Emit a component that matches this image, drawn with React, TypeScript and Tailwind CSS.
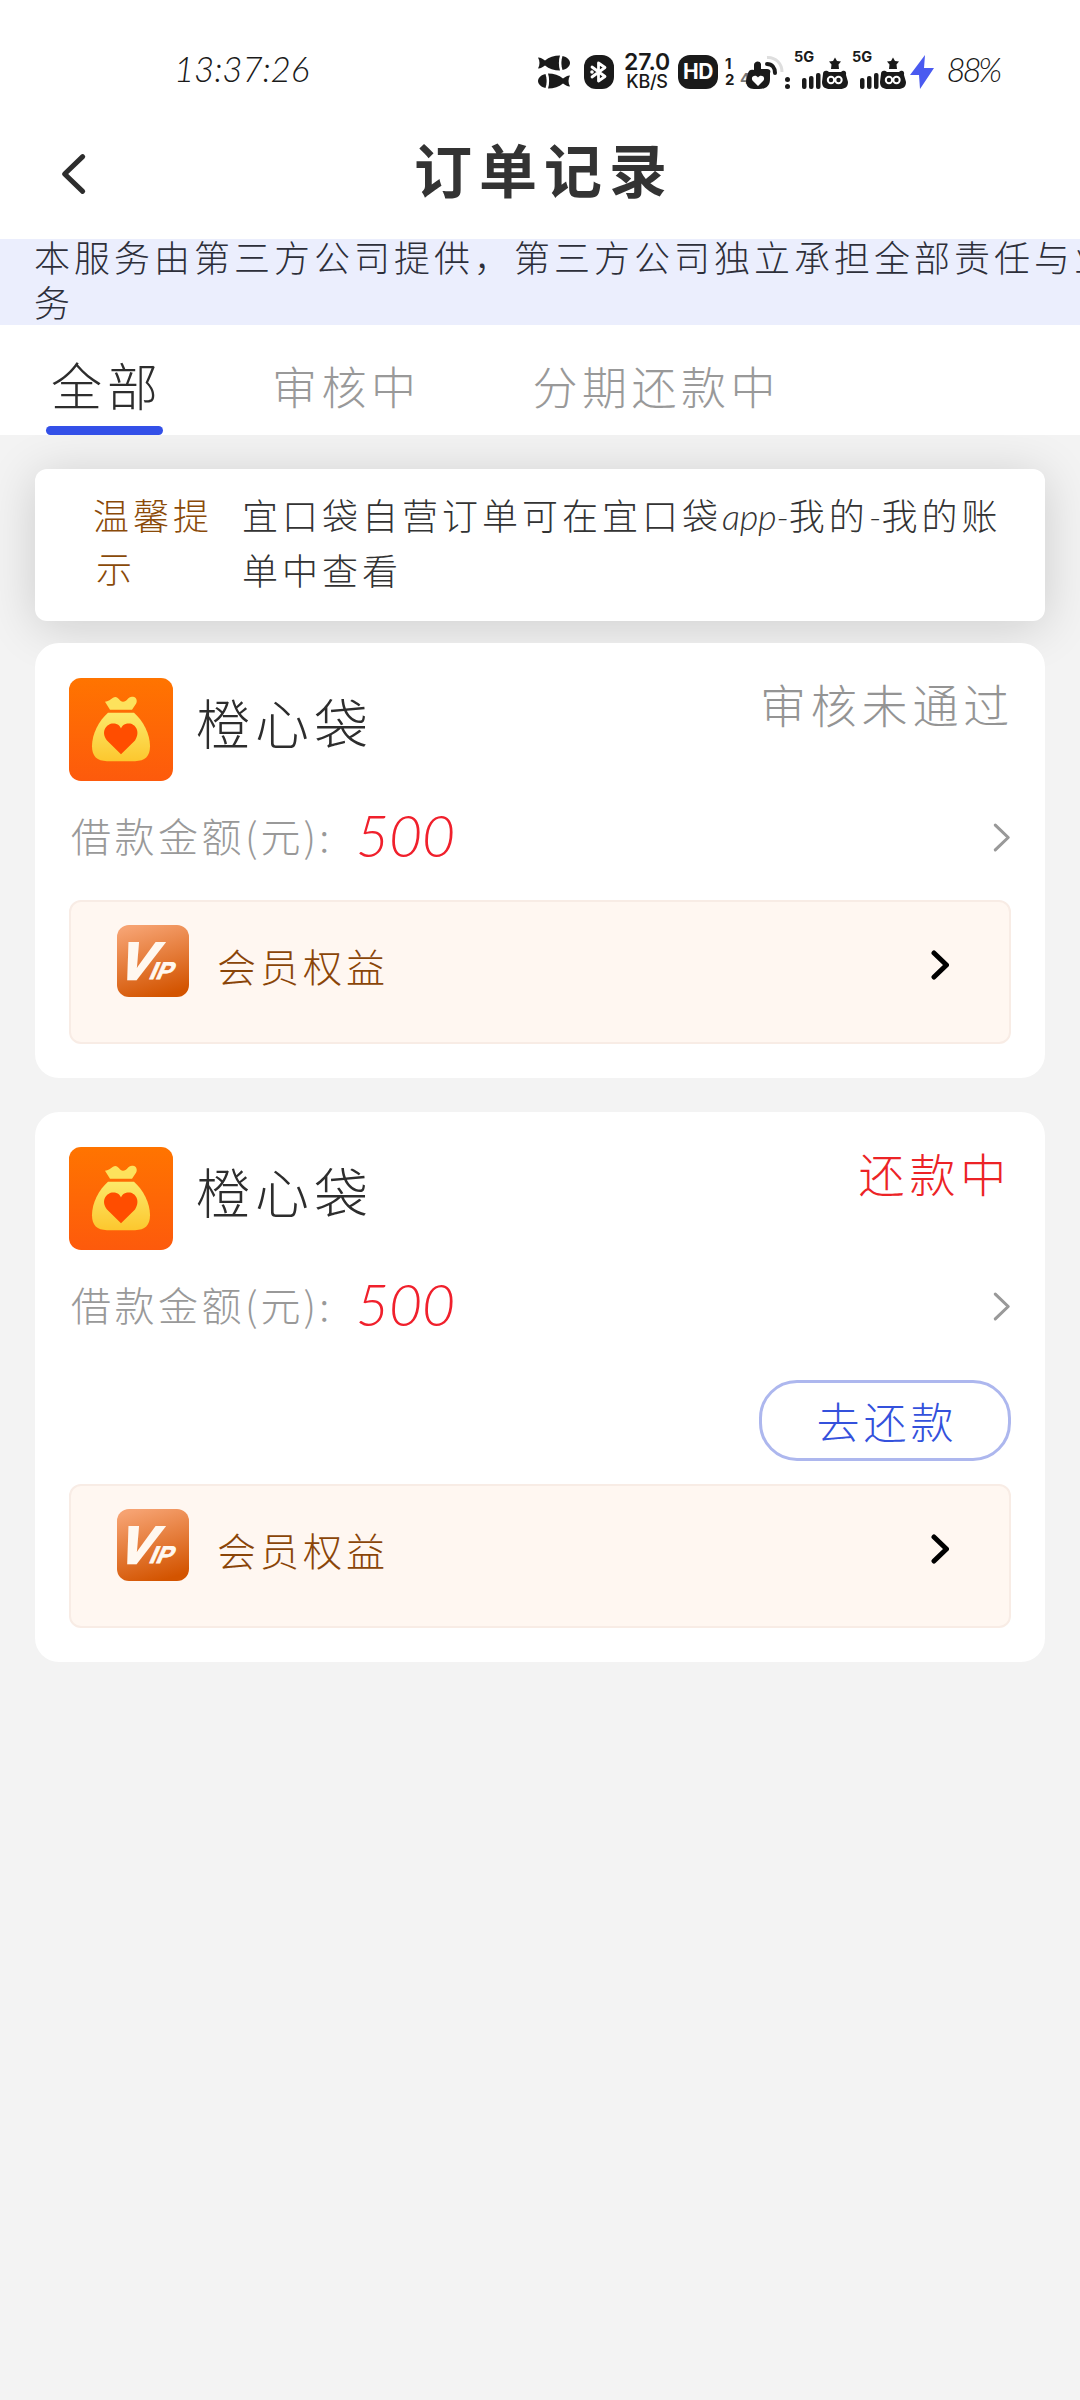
import React from 'react';

interface OrderType {
  id: number;
  name: string;
  amount: number;
  status: string;
  repaying: boolean;
}

const orders: OrderType[] = [
  { id: 1, name: '橙心袋', amount: 500, status: '审核未通过', repaying: false },
  { id: 2, name: '橙心袋', amount: 500, status: '还款中', repaying: true },
];

const tabs = ['全部', '审核中', '分期还款中'];

function Fish({ flip }: { flip?: boolean }) {
  return (
    <svg width="32" height="16" viewBox="0 0 32 16" className={flip ? '-scale-x-100' : ''}>
      <path
        d="M0 2.500C3 2.500 5 4 7 5.500C11 2 16 .5 22 .5C20.500 5 20.500 11 22 15.500C16 15.500 11 14 7 10.500C5 12 3 13.500 0 13.500C2 10 2 6 0 2.500Z"
        fill="#1a1a1a"
      />
      <path d="M24.500 1C29 2 32 5 32 8C32 11 29 14 24.500 15C23 11 23 5 24.500 1Z" fill="#1a1a1a" />
    </svg>
  );
}

function BluetoothBadge() {
  return (
    <svg width="30" height="34" viewBox="0 0 30 34" className="ml-[14px]">
      <rect width="30" height="34" rx="12" fill="#1a1a1a" />
      <path
        d="M8 12L21 21.500L14.500 26V8L21 12.500L8 22"
        fill="none"
        stroke="#fff"
        strokeWidth="2.800"
        strokeLinecap="round"
        strokeLinejoin="round"
      />
      <circle cx="8" cy="17" r="1.800" fill="#fff" />
    </svg>
  );
}

function HandHeart() {
  return (
    <svg width="44" height="34" viewBox="0 0 44 34" className="ml-[6px] overflow-visible">
      <text x="0" y="29" fontFamily="Inter, sans-serif" fontSize="15" fontWeight="700" fill="#777">
        4
      </text>
      <path
        d="M14 15V10C14 6 20 5 21 9V14H27C30 14 31 16 30 18V24C30 31 26 34 19 34H14C9 34 6 31 6 26L8 18C9 15 11 14 14 15Z"
        fill="#1a1a1a"
      />
      <path d="M18 31L12.500 25.500C10 21 16 19 18 22.500C20 19 26 21 23.500 25.500Z" fill="#fff" />
      <path d="M27 9C32 9 35 13 35 18" fill="none" stroke="#1a1a1a" strokeWidth="4" strokeLinecap="round" />
      <path d="M27 2.500C36 2 42 9 42 17" fill="none" stroke="#dedede" strokeWidth="3" />
    </svg>
  );
}

function Signal() {
  return (
    <svg width="54" height="40" viewBox="0 0 54 40" className="mt-[-6px] overflow-visible">
      <text x="0" y="13" fontFamily="Inter, sans-serif" fontSize="14.500" fontWeight="700" fill="#1a1a1a">
        5G
      </text>
      <g fill="#1a1a1a">
        <rect x="8" y="29" width="4.500" height="11" rx="2" />
        <rect x="15" y="27" width="4.500" height="13" rx="2" />
        <rect x="22" y="24" width="4.500" height="16" rx="2" />
        <path d="M29 25C29 21 33 21 35 23H47C49 21 53 21 52 26L54 33C54 38 51 40 46 40H36C31 40 28 38 28 33Z" />
        <path d="M41 8.500L43 12L47 12.500L44.500 15.500L45 20H37L37.500 15.500L35 12.500L39 12Z" />
      </g>
      <g fill="none" stroke="#fff" strokeWidth="2">
        <circle cx="37" cy="31" r="3.200" />
        <circle cx="44.500" cy="31" r="3.200" />
      </g>
    </svg>
  );
}

function StatusBar() {
  return (
    <div className="flex h-[112px] items-center pt-8 pl-[174px] text-[#1a1a1a]">
      <span className="w-[136px] pb-[7px] font-[Lato] text-[35px] leading-none font-light tracking-[-0.2px] whitespace-nowrap italic">
        13:37:26
      </span>
      <div className="ml-[228px] flex flex-col gap-[2px]">
        <Fish />
        <Fish flip />
      </div>
      <BluetoothBadge />
      <div className="ml-[10px] flex w-[46px] flex-col items-center font-[Inter] font-medium">
        <span className="text-[23px] leading-[20px] font-semibold tracking-[-0.2px]">27.0</span>
        <span className="text-[18px] leading-[20px] tracking-[-0.3px]">KB/S</span>
      </div>
      <span className="ml-[8px] flex h-[34px] w-10 items-center justify-center rounded-xl bg-[#1a1a1a] font-[Inter] text-[21px] font-bold tracking-[-0.5px] text-white">
        HD
      </span>
      <div className="ml-[7px] flex flex-col font-[Inter] text-[15px] leading-[16px] font-bold">
        <span>1</span>
        <span>2</span>
      </div>
      <HandHeart />
      <div className="ml-[1px] flex flex-col gap-[2px] self-center pt-[22px]">
        <span className="size-[5px] rounded-full bg-[#1a1a1a]" />
        <span className="size-[5px] rounded-full bg-[#1a1a1a]" />
      </div>
      <div className="ml-[4px] flex gap-1">
        <Signal />
        <Signal />
      </div>
      <svg width="24" height="34" viewBox="0 0 24 34" className="ml-[4px]">
        <path d="M15 0L0 20H9L10 34L24 13H14Z" fill="#4a5af0" />
      </svg>
      <span className="ml-[12px] pb-[6px] font-[Lato] text-[33px] leading-none font-light tracking-[-3.2px] italic">
        88%
      </span>
    </div>
  );
}

function Chevron({ className, strokeWidth }: { className: string; strokeWidth: number }) {
  return (
    <svg viewBox="0 0 18 30" className={className} fill="none" stroke="currentColor">
      <path d="M3 3L15.500 15L3 27" strokeWidth={strokeWidth} strokeLinecap="round" strokeLinejoin="round" />
    </svg>
  );
}

function BagLogo() {
  return (
    <svg width="104" height="103" viewBox="0 0 104 104" preserveAspectRatio="none">
      <defs>
        <linearGradient id="bagBg" x1="0" y1="0" x2="0" y2="1">
          <stop offset="0" stopColor="#ff7400" />
          <stop offset="1" stopColor="#fd5a0c" />
        </linearGradient>
        <linearGradient id="bag" x1="0" y1="0" x2="0" y2="1">
          <stop offset="0" stopColor="#fce96a" />
          <stop offset="1" stopColor="#fcc72e" />
        </linearGradient>
      </defs>
      <rect width="104" height="104" rx="12" fill="url(#bagBg)" />
      <path
        d="M41 32L36 24C39 24 41 22 44 20C49 17 50 24 54 24C58 24 59 19 63 19C67 18 69 23 67 26L63 32Z"
        fill="#fde25c"
      />
      <path
        d="M39 35H65C74 43 81 56 81 69C81 79 76 84 66 84H38C28 84 23 79 23 69C23 56 30 43 39 35Z"
        fill="url(#bag)"
      />
      <path d="M52 77L38 63C31 54 38 46 44 46C48 46 51 48 52 51C53 48 56 46 60 46C66 46 72 54 66 63Z" fill="#ff4d00" />
    </svg>
  );
}

function VipLogo() {
  return (
    <svg width="72" height="72" viewBox="0 0 72 72">
      <defs>
        <linearGradient id="vipBg" x1="0.300" y1="0" x2="0.600" y2="1">
          <stop offset="0" stopColor="#f6a271" />
          <stop offset="1" stopColor="#d35400" />
        </linearGradient>
      </defs>
      <rect width="72" height="72" rx="12" fill="url(#vipBg)" />
      <g fontFamily="Liberation Sans, sans-serif" fontWeight="700" fill="#fff8f0" stroke="#fff8f0">
        <text transform="translate(-2 54) skewX(-22)" fontSize="52" strokeWidth="2.500">
          V
        </text>
        <text transform="translate(31 54) skewX(-24)" fontSize="24" strokeWidth="0.800">
          IP
        </text>
      </g>
    </svg>
  );
}

function Tip() {
  return (
    <section className="flex h-[152px] rounded-xl bg-white pt-[19px] pl-[58px] text-[36px] leading-[53px] tracking-[4px] shadow-[0_6px_50px_rgba(0,0,0,0.16)]">
      <div className="w-[149px] text-[#8a4a08]">
        <p>温馨提</p>
        <p className="pl-[3px]">示</p>
      </div>
      <div className="whitespace-nowrap text-[#333]">
        <p>
          宜口袋自营订单可在宜口袋<span className="font-[Lato] tracking-[-0.3px] italic">app-</span>我的
          <span className="font-[Lato] tracking-normal italic">-</span>我的账
        </p>
        <p>单中查看</p>
      </div>
    </section>
  );
}

function OrderCard({ order }: { order: OrderType }) {
  return (
    <li className="rounded-3xl bg-white px-[34px] pt-[35px] pb-[34px]">
      <div className="flex h-[103px]">
        <BagLogo />
        <h2 className="ml-[23px] pt-[14px] text-[54px] leading-[60px] tracking-[5px] text-[#2d2d2d]">{order.name}</h2>
        <span
          className={`ml-auto text-[46px] leading-[50px] tracking-[4.8px] ${
            order.repaying ? 'text-[#ec2326]' : '-mr-[3px] text-[#949494]'
          }`}
        >
          {order.status}
        </span>
      </div>

      <div className="flex h-[112px] items-center">
        <span className="w-[287px] pb-[4px] pl-[2px] text-[40px] tracking-[3.5px] whitespace-nowrap text-[#999]">
          借款金额<span className="tracking-[3px]">(元):</span>
        </span>
        <span className="pb-[3px] font-[Lato] text-[57px] leading-none text-[#f0202c] italic">{order.amount}</span>
        <Chevron className="ml-auto h-[31px] w-[19px] text-[#999]" strokeWidth={3} />
      </div>

      {order.repaying && (
        <div className="mt-[18px] flex justify-end pb-4">
          <button className="h-[81px] w-[252px] rounded-[38px] border-3 border-[#adb7ee] pl-[4px] text-[43px] leading-none tracking-[4px] text-[#3451dc]">
            去还款
          </button>
        </div>
      )}

      <div className="mt-[7px] flex h-[144px] rounded-xl border-2 border-[#f8ece5] bg-[#fff7f1] pt-[23px] pr-[60px] pl-[46px]">
        <VipLogo />
        <span className="ml-[28px] pt-[10px] text-[39px] leading-[60px] tracking-[4px] text-[#8a4508]">会员权益</span>
        <Chevron className="mt-[25px] ml-auto h-[30px] w-[18px] text-black" strokeWidth={5} />
      </div>
    </li>
  );
}

export default function App() {
  return (
    <div className="h-[2400px] w-[1080px] overflow-hidden bg-[#f3f3f3] font-['Noto_Sans_CJK_SC',sans-serif] font-light">
      <header className="bg-white">
        <StatusBar />
        <div className="flex h-[127px] items-center pl-[61px]">
          <Chevron className="mb-1 h-[44px] w-[26px] -scale-x-100 text-[#2d2d2d]" strokeWidth={3.5} />
          <h1 className="ml-[327px] pb-4 text-[58px] leading-[70px] font-bold tracking-[7px] text-[#333]">订单记录</h1>
        </div>
      </header>

      <div className="h-[86px] overflow-hidden bg-[#ebeefd] pl-[34px] text-[36px] leading-[45px] tracking-[4px] whitespace-nowrap text-[#2d2f3a]">
        <p className="-mt-[5px]">本服务由第三方公司提供，第三方公司独立承担全部责任与业</p>
        <p>务</p>
      </div>

      <nav className="flex h-[110px] bg-white pl-[46px] leading-[60px] whitespace-nowrap">
        {tabs.map((tab, index) => (
          <div
            key={tab}
            className={
              index === 0
                ? 'mr-[109px] flex w-[117px] flex-col justify-between pt-[29px] text-[51px] tracking-[5px] text-[#2d2d2d]'
                : 'mr-[112px] pt-[31px] text-[45px] tracking-[4.5px] text-[#999]'
            }
          >
            <span className={index === 0 ? 'pl-[5px]' : ''}>{tab}</span>
            {index === 0 && <div className="h-[9px] rounded-full bg-[#3350e8]" />}
          </div>
        ))}
      </nav>

      <main className="overflow-hidden px-[35px] pt-[34px] pb-10">
        <Tip />
        <ul className="relative mt-[22px] flex flex-col gap-[34px]">
          {orders.map((order) => (
            <OrderCard key={order.id} order={order} />
          ))}
        </ul>
      </main>
    </div>
  );
}
